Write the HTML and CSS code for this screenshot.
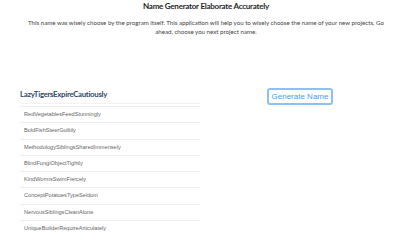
FILE: index.html
```html
<!DOCTYPE html>
<html>
<head>
<meta charset="utf-8">
<link rel="stylesheet" href="styles.css">
</head>
<body>
<header class="intro">
  <h1 class="title">Name Generator Elaborate Accurately</h1>
  <p class="desc">This name was wisely choose by the program itself. This application will help you to wisely choose the name of your new projects, Go ahead, choose you next project name.</p>
</header>
<main class="content">
  <section class="names">
    <h2 class="current">LazyTigersExpireCautiously</h2>
    <ul class="list">
      <li>RedVegetablesFeedStunningly</li>
      <li>BoldFishSteerGuiltily</li>
      <li>MethodologySiblingsSharedImmensely</li>
      <li>BlindFungiObjectTightly</li>
      <li>KindWormsSwimFiercely</li>
      <li>ConceptPotatoesTypeSeldom</li>
      <li>NervousSiblingsCleanAlone</li>
      <li>UniqueBuilderRequireArticulately</li>
    </ul>
  </section>
  <section class="actions">
    <button class="generate">Generate Name</button>
  </section>
</main>
</body>
</html>
```
FILE: styles.css
```css
html, body {
  margin: 0;
  padding: 0;
  background: #fff;
}
body {
  font-family: Lato, "Open Sans", sans-serif;
  color: #222;
}
.intro {
  text-align: center;
  padding: 1px 12px 0 24px;
}
.title {
  font-size: 8px;
  letter-spacing: -0.25px;
  line-height: 10px;
  font-weight: 700;
  margin: 0;
  color: #1f1f1f;
}
.desc {
  font-size: 6.15px;
  line-height: 9px;
  margin: 7px 0 0;
  color: #444;
}
.content {
  display: flex;
  padding: 0 20px;
  margin-top: 53px;
}
.names {
  width: 180px;
}
.current {
  font-size: 7.8px;
  letter-spacing: -0.3px;
  line-height: 11px;
  font-weight: 700;
  color: #2f4a6b;
  margin: 0;
  padding-bottom: 3px;
  border-bottom: 1px solid #f2f2f2;
}
.list {
  list-style: none;
  margin: 2px 0 0;
  padding: 0;
  border-top: 1px solid #eeeeee;
}
.list li {
  font-family: "Liberation Sans", Arial, sans-serif;
  font-size: 5.6px;
  color: #666;
  height: 15.3px;
  line-height: 15.3px;
  padding-left: 4px;
  border-bottom: 1px solid #eeeeee;
}
.list li:last-child {
  border-bottom: none;
}
.actions {
  flex: 1;
  display: flex;
  justify-content: center;
  align-items: flex-start;
  padding-left: 20px;
}
.generate {
  font-family: "Liberation Sans", Arial, sans-serif;
  font-size: 8px;
  white-space: nowrap;
  color: #4a9af0;
  background: #fff;
  border: 2px solid #8cc0f7;
  border-radius: 3px;
  padding: 0;
  height: 17px;
  width: 66px;
  margin-top: -1px;
}
```
